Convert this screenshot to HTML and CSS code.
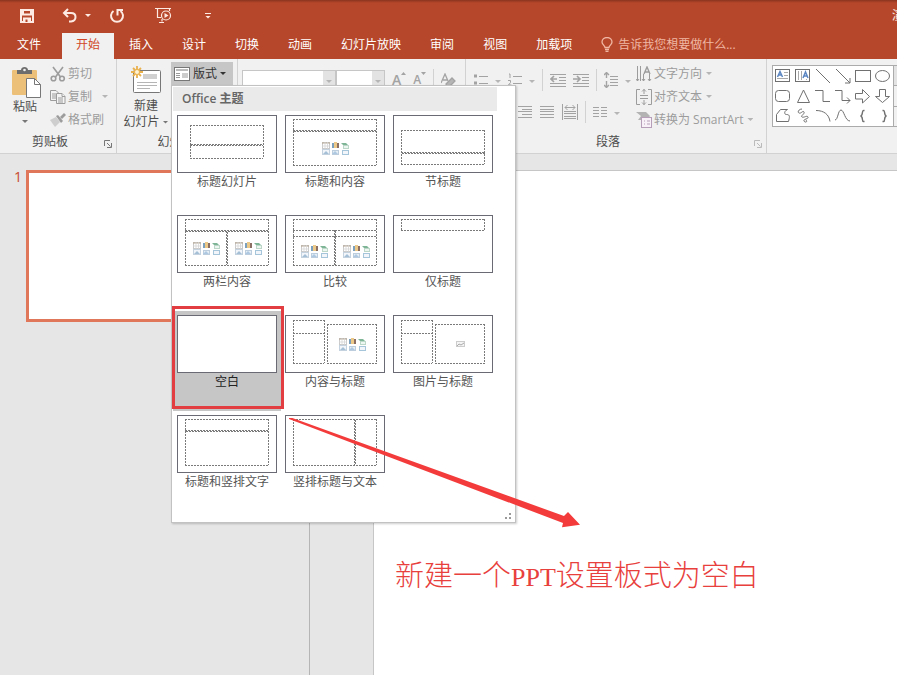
FILE: index.html
```html
<!DOCTYPE html>
<html lang="zh-CN">
<head>
<meta charset="utf-8">
<title>PowerPoint</title>
<link rel="stylesheet" href="styles.css">
</head>
<body>
<svg class="defs" aria-hidden="true">
  <symbol id="cluster" viewBox="0 0 27 13">
    <rect x=".5" y=".5" width="7" height="6" fill="#fff" stroke="#c9c9c9"/><path d="M0 1h8" stroke="#b5a58f"/><path d="M3 0v7M5.500 0v7M0 4h8" stroke="#d4d4d4" stroke-width=".8"/>
    <rect x="10" y="1" width="2" height="5" fill="#7ba0bd"/><rect x="12" y="0" width="3" height="6" fill="#ecc988"/><rect x="15" y="1" width="2" height="5" fill="#8b6f63"/>
    <path d="M19 1h5l2 2h-5z" fill="#7fb597"/><rect x="21.500" y="3.500" width="5" height="3" fill="#eef6f2" stroke="#bcd6c8"/>
    <rect x=".5" y="7.500" width="7" height="5" fill="#f2f6fa" stroke="#c4d2e0"/><path d="M1 12l3-3 3 3z" fill="#a5bfd6"/>
    <rect x="10.500" y="8.500" width="6" height="4" fill="#e6eef6" stroke="#bccede"/><path d="M10 12l3-3 3 3z" fill="#adc8e0"/>
    <rect x="20.500" y="8.500" width="6" height="4" fill="#f2f6fa" stroke="#a5c5db"/>
  </symbol>
  <symbol id="launcher" viewBox="0 0 8 8"><path d="M.5 6V.5H6M3 3l3.500 3.500M7.500 3v4.500H3" fill="none" stroke="currentColor"/></symbol>
</svg>
<div class="app">
  <header class="titlebar">
    <div class="quick">
      <button class="q save" aria-label="保存"><svg width="16" height="16" viewBox="0 0 16 16" fill="none" stroke="currentColor" stroke-width="2"><path d="M2 2h12v12H2zM4 2v4.500h8V2"/><path d="M4 9.500h8V14H4z" fill="currentColor" stroke="none"/><path d="M6.500 11.500v2.500h2v-2.500z" fill="#b7472a" stroke="none"/></svg></button>
      <button class="q undo" aria-label="撤消"><svg width="16" height="16" viewBox="0 0 16 16" fill="none" stroke="currentColor" stroke-width="2"><path d="M6 1L2 5l4 4M2.500 5H9c6 0 6 8 0 8.500H7"/></svg><i class="caret"></i></button>
      <button class="q redo" aria-label="重复"><svg width="16" height="16" viewBox="0 0 16 16" fill="none" stroke="currentColor" stroke-width="2"><path d="M4.500 3a6 6 0 1 0 7 0M8.500 7.500V2H14"/></svg></button>
      <button class="q show" aria-label="从头开始"><svg width="17" height="17" viewBox="0 0 17 17" fill="none" stroke="currentColor" stroke-width="1.200"><path d="M0 1.500h16M2.500 2v8.500H6M14.500 2v2M7 12v2.500M4 15.500h5"/><circle cx="11" cy="8.500" r="4.500"/><path d="M9.500 6v5l4-2.500z" fill="currentColor" stroke="none"/></svg></button>
      <button class="q more" aria-label="自定义快速访问工具栏"><i class="bar"></i><i class="caret"></i></button>
      <span class="doc">演</span>
    </div>
    <nav class="tabs">
      <a class="tab file" href="#">文件</a><a class="tab on" href="#">开始</a><a class="tab" href="#">插入</a><a class="tab" href="#">设计</a><a class="tab" href="#">切换</a><a class="tab" href="#">动画</a><a class="tab" href="#">幻灯片放映</a><a class="tab" href="#">审阅</a><a class="tab" href="#">视图</a><a class="tab" href="#">加载项</a>
      <a class="tab tell" href="#"><svg width="12" height="15" viewBox="0 0 12 15" fill="none" stroke="currentColor" stroke-width="1.300"><path d="M4 10.500c0-2-3-3-3-5.500a5 4.500 0 0 1 10 0c0 2.500-3 3.500-3 5.500zM4 12.500h4M4.500 14.300h3"/></svg>告诉我您想要做什么...</a>
    </nav>
  </header>

  <section class="ribbon">
    <div class="group clip">
      <div class="body">
        <button class="big paste"><svg width="30" height="31" viewBox="0 0 30 31"><rect x="0" y="3" width="25" height="25" rx="1" fill="#ecc078"/><path d="M5 3h4c0-4 7-4 7 0h4v4H5z" fill="#6d6d6d"/><circle cx="12.500" cy="3" r="1.300" fill="#f0f0f0"/><path d="M14.500 11.500h8l6 6v13h-14z" fill="#fff" stroke="#777"/><path d="M22.500 11.500v6h6" fill="none" stroke="#777"/></svg><span>粘贴</span><i class="caret"></i></button>
        <div class="stack">
          <button class="tool off"><svg width="16" height="16" viewBox="0 0 16 16" fill="none" stroke="currentColor" stroke-width="1.600"><path d="M3 1l7.500 10M13 1L5.500 11"/><circle cx="3.500" cy="12.500" r="2.300"/><circle cx="12" cy="12.500" r="2.300"/></svg>剪切</button>
          <button class="tool off"><svg width="16" height="16" viewBox="0 0 16 16" fill="#f4f4f4" stroke="currentColor"><path d="M.5 1.500H6l3 3v7H.5zM2 5h4M2 7h4M2 9h4"/><path d="M6.500 4.500H12l3 3v7H6.500z"/><path d="M12 4.500v3h3M8 9h5M8 11h5M8 13h5"/></svg>复制<i class="caret far"></i></button>
          <button class="tool off"><svg width="16" height="16" viewBox="0 0 16 16" fill="currentColor"><path d="M0 8l6-3 4 5-5 5z" opacity=".4"/><path d="M6 4l2-1 5 6-2 2z"/><path d="M10 5l4-4 2 2-4 4z"/></svg>格式刷</button>
        </div>
      </div>
      <div class="foot"><span>剪贴板</span><button class="launch" aria-label="剪贴板选项"><svg width="8" height="8"><use href="#launcher"/></svg></button></div>
    </div>

    <div class="group slides">
      <div class="body">
        <button class="big new"><svg width="30" height="27" viewBox="0 0 30 27"><rect x="2.500" y="4.500" width="27" height="22" rx="1" fill="#fff" stroke="#777"/><rect x="12" y="8" width="14" height="5" fill="#d0d0d0"/><path d="M6 16.500h20M6 19.500h20M6 22.500h13" stroke="#b5b5b5"/><path d="M6 0v12M0 6h12M2 2l8 8M10 2l-8 8" stroke="#e9b04e" stroke-width="1.800"/><circle cx="6" cy="6" r="2.500" fill="#fff3d4" stroke="#e9b04e"/></svg><span>新建</span><span class="line">幻灯片<i class="caret"></i></span></button>
        <div class="dropdown">
          <button class="layout" aria-expanded="true"><svg width="16" height="14" viewBox="0 0 16 14" fill="none" stroke="#777"><rect x=".5" y=".5" width="15" height="13" fill="#fff"/><path d="M2 3h12" stroke-width="2" stroke="#bbb"/><path d="M2 6.500h4M2 8.500h4M2 10.500h4" stroke="#999"/><rect x="8" y="6" width="6" height="5" fill="#ccc" stroke="none"/></svg>版式<i class="caret"></i></button>
          <div class="menu">
            <h2>Office 主题</h2>
            <div class="grid">
              <button class="item"><svg class="thumb" viewBox="0 0 100 58"><path d="M13 10.500h73M13 30.500h73M14 29.500h72M13 43.500h73M13.500 10v33M86.500 10v33"/></svg>标题幻灯片</button>
              <button class="item"><svg class="thumb" viewBox="0 0 100 58"><path d="M8 4.500h84M8 15.500h84M9 16.500h83M8 50.500h84M8.500 4v46M91.500 4v46"/><use href="#cluster" x="37" y="27" width="27" height="13"/></svg>标题和内容</button>
              <button class="item"><svg class="thumb" viewBox="0 0 100 58"><path d="M8 15.500h84M8 37.500h84M9 38.500h83M8 49.500h84M8.500 15v34M91.500 15v34"/></svg>节标题</button>
              <button class="item"><svg class="thumb" viewBox="0 0 100 58"><path d="M8 4.500h84M8 15.500h84M9 16.500h83M8 50.500h84M8.500 4v46M91.500 4v46M49.500 16v34M50.500 17v33"/><use href="#cluster" x="16" y="27" width="27" height="13"/><use href="#cluster" x="58" y="27" width="27" height="13"/></svg>两栏内容</button>
              <button class="item"><svg class="thumb" viewBox="0 0 100 58"><path d="M8 4.500h84M8 15.500h84M8 21.500h84M8 50.500h84M8.500 4v46M91.500 4v46M49.500 15v35M50.500 16v34"/><use href="#cluster" x="16" y="30" width="27" height="13"/><use href="#cluster" x="58" y="30" width="27" height="13"/></svg>比较</button>
              <button class="item"><svg class="thumb" viewBox="0 0 100 58"><path d="M8 4.500h84M8 15.500h84M8.500 4v11M91.500 4v11"/></svg>仅标题</button>
              <button class="item picked"><svg class="thumb" viewBox="0 0 100 58"></svg>空白</button>
              <button class="item"><svg class="thumb" viewBox="0 0 100 58"><path d="M8 5.500h31M8 18.500h31M8 48.500h31M8.500 5v43M39.500 5v43M42 9.500h50M42 48.500h50M42.500 9v39M91.500 9v39"/><use href="#cluster" x="54" y="23" width="27" height="13"/></svg>内容与标题</button>
              <button class="item"><svg class="thumb" viewBox="0 0 100 58"><path d="M8 5.500h31M8 18.500h31M8 48.500h31M8.500 5v43M39.500 5v43M42 9.500h50M42 48.500h50M42.500 9v39M91.500 9v39"/><rect x="63.500" y="26.500" width="8" height="5" fill="#f4f4f4" stroke="#ccc"/><path class="solid" d="M64 31l2-2 2 1 3-2"/></svg>图片与标题</button>
              <button class="item"><svg class="thumb" viewBox="0 0 100 58"><path d="M8 4.500h84M8 15.500h84M9 16.500h83M8 50.500h84M8.500 4v46M91.500 4v46"/></svg>标题和竖排文字</button>
              <button class="item"><svg class="thumb" viewBox="0 0 100 58"><path d="M8 4.500h84M8 50.500h84M8.500 4v46M91.500 4v46M69.500 4v46M70.500 5v45"/></svg>竖排标题与文本</button>
            </div>
            <svg class="grip" width="8" height="8" viewBox="0 0 8 8" fill="#999"><path d="M4 0h2v2H4zM0 4h2v2H0zM4 4h2v2H4z"/></svg>
          </div>
        </div>
      </div>
      <div class="foot"><span>幻灯片</span></div>
    </div>

    <div class="group font">
      <div class="body">
        <div class="row">
          <span class="combo name"><select aria-label="字体"><option></option></select><i class="caret"></i></span><span class="combo size"><select aria-label="字号"><option></option></select><i class="caret"></i></span>
          <button class="glyph big-a" aria-label="增大字号">A<svg width="5" height="4" viewBox="0 0 5 4"><path d="M0 3l2.500-3L5 3z" fill="currentColor"/></svg></button>
          <button class="glyph" aria-label="减小字号">A<svg width="5" height="4" viewBox="0 0 5 4"><path d="M0 0h5L2.500 3z" fill="currentColor"/></svg></button>
          <i class="sep"></i>
          <button class="glyph" aria-label="清除格式"><svg width="15" height="15" viewBox="0 0 15 15" fill="none" stroke="currentColor" stroke-width="1.300"><path d="M0 10L4 1l3 7M2 7h4"/><path d="M5 11l6-6 3 3-6 6H6z" fill="#b5b5b5"/></svg></button>
        </div>
      </div>
      <div class="foot"></div>
    </div>

    <div class="group para">
      <div class="body">
        <div class="rows">
          <div class="row">
            <button class="split" aria-label="项目符号"><svg width="14" height="14" viewBox="0 0 14 14" stroke="currentColor"><path d="M0 3h3M0 10h3" stroke-width="3"/><path d="M5 3.500h9M5 10.500h9"/></svg><i class="caret"></i></button>
            <button class="split" aria-label="编号"><svg width="14" height="14" viewBox="0 0 14 14" stroke="currentColor" fill="none"><path d="M1 1h1v4M0 7.500h2.500v2L.5 12h3M5 3.500h9M5 10.500h9"/></svg><i class="caret"></i></button>
            <i class="sep"></i>
            <button class="icon" aria-label="降低列表级别"><svg width="16" height="14" viewBox="0 0 16 14" fill="none" stroke="currentColor"><path d="M0 1.500h16M9 4.500h7M9 7.500h7M0 10.500h16M0 13.500h16"/><path d="M7 6H1M4 3L1 6l3 3" stroke-width="1.600"/></svg></button>
            <button class="icon" aria-label="提高列表级别"><svg width="16" height="14" viewBox="0 0 16 14" fill="none" stroke="currentColor"><path d="M0 1.500h16M9 4.500h7M9 7.500h7M0 10.500h16M0 13.500h16"/><path d="M0 6h6M4 3l3 3-3 3" stroke-width="1.600"/></svg></button>
            <i class="sep"></i>
            <button class="split" aria-label="行距"><svg width="14" height="16" viewBox="0 0 14 16" fill="none" stroke="currentColor"><path d="M6 4.500h8M6 7.500h8M6 10.500h8M6 13.500h8"/><path d="M2.500 0v6M0 3l2.500-2.500L5 3M2.500 9v6M0 13l2.500 2.500L5 13" stroke-width="1.400"/></svg><i class="caret"></i></button>
          </div>
          <div class="row">
            <button class="icon" aria-label="左对齐"><svg width="15" height="12" viewBox="0 0 15 12" stroke="currentColor"><path d="M0 .5h14M0 3.500h9M0 6.500h14M0 9.500h9"/></svg></button>
            <button class="icon" aria-label="居中"><svg width="15" height="12" viewBox="0 0 15 12" stroke="currentColor"><path d="M0 .5h14M3 3.500h8M0 6.500h14M3 9.500h8"/></svg></button>
            <button class="icon" aria-label="右对齐"><svg width="15" height="12" viewBox="0 0 15 12" stroke="currentColor"><path d="M0 .5h14M4 3.500h10M0 5.500h14M4 8.500h10M0 11.500h14"/></svg></button>
            <button class="icon" aria-label="两端对齐"><svg width="15" height="12" viewBox="0 0 15 12" stroke="currentColor"><path d="M0 .5h14M0 3.500h14M0 5.500h14M0 8.500h14M0 11.500h14"/></svg></button>
            <button class="icon" aria-label="分散对齐"><svg width="16" height="16" viewBox="0 0 16 16" fill="none" stroke="currentColor"><path d="M.5 0v16M15.500 0v16M2 7.500h12M2 9.500h12M2 12.500h12M2 14.500h12M3 3.500h10M5.500 1L3 3.500 5.500 6M10.500 1L13 3.500 10.500 6"/></svg></button>
            <i class="sep"></i>
            <button class="split" aria-label="分栏"><svg width="14" height="12" viewBox="0 0 14 12" stroke="currentColor"><path d="M0 1.500h6M0 4.500h6M0 7.500h6M0 10.500h6M8 1.500h6M8 4.500h6M8 7.500h6M8 10.500h6"/></svg><i class="caret"></i></button>
          </div>
        </div>
        <div class="stack">
          <button class="tool off"><svg width="16" height="16" viewBox="0 0 16 16" fill="none" stroke="currentColor"><path d="M1.500 0v15M4.500 0v15M7.500 8v7M13.500 8v7M0 13l1.500 2L3 13M6 13l1.500 2L9 13M12 13l1.500 2 1.500-2"/><path d="M8 8l3-7 3 7M9 6h4" stroke-width="1.400"/></svg>文字方向<i class="caret"></i></button>
          <button class="tool off"><svg width="16" height="16" viewBox="0 0 16 16" fill="none" stroke="currentColor"><path d="M4 .5H.5v15H4M12 .5h3.500v15H12M4 6.500h8M4 9.500h8M8 0v5M8 11v5M6 2.500L8 .5l2 2M6 13.500l2 2 2-2"/></svg>对齐文本<i class="caret"></i></button>
          <button class="tool off"><svg width="16" height="16" viewBox="0 0 16 16"><path d="M0 0h10l4 4-3 4H2l3-4z" fill="#b3b3b3"/><rect x="5.500" y="5.500" width="10" height="10" fill="#f8f2f8" stroke="#b79fb9"/><path d="M8 9h1M11 9h3M8 12h1M11 12h3" stroke="#b79fb9"/></svg>转换为 SmartArt<i class="caret"></i></button>
        </div>
      </div>
      <div class="foot"><span>段落</span><button class="launch pale" aria-label="段落选项"><svg width="8" height="8"><use href="#launcher"/></svg></button></div>
    </div>

    <div class="group draw">
      <div class="body">
        <div class="shapes">
          <svg viewBox="0 0 20 20"><rect x="2.500" y="3.500" width="14" height="12"/><path d="M11 6.500h4M11 9.500h4M4 12.500h11" stroke="#aaa"/><path class="blue" d="M4.500 11L7 5.500 9.500 11M5.500 9h3"/></svg>
          <svg viewBox="0 0 20 20"><rect x="2.500" y="3.500" width="14" height="12"/><path d="M5.500 5v9M8.500 5v9M13.500 13v1" stroke="#aaa"/><path class="blue" d="M10 12l2.500-6 2.500 6M11 10h3"/></svg>
          <svg viewBox="0 0 20 20"><path d="M3 3l14 14"/></svg>
          <svg viewBox="0 0 20 20"><path d="M3 3l14 14M17 12v5h-5"/></svg>
          <svg viewBox="0 0 20 20"><rect x="2.500" y="4.500" width="15" height="11"/></svg>
          <svg viewBox="0 0 20 20"><ellipse cx="9.500" cy="10" rx="7" ry="5.500"/></svg>
          <svg viewBox="0 0 20 20"><rect x="2.500" y="4.500" width="14" height="11" rx="3"/></svg>
          <svg viewBox="0 0 20 20"><path d="M10.500 4l6 12.500h-12z"/></svg>
          <svg viewBox="0 0 20 20"><path d="M2 4.500h8v11h7"/></svg>
          <svg viewBox="0 0 20 20"><path d="M2 4.500h7v10h8M14 11.500l3 3-3 3"/></svg>
          <svg viewBox="0 0 20 20"><path d="M2.500 7.500h7v-4l7 7-7 6.500v-4h-7z"/></svg>
          <svg viewBox="0 0 20 20"><path d="M6.500 3.500h6v7h4l-7 6-7-6h4z"/></svg>
          <svg viewBox="0 0 20 20"><path d="M3.500 15.500v-7l4-5h7c-3 1-4 5-1 5 4 0 3 3 2 7z"/></svg>
          <svg viewBox="0 0 20 20"><path d="M9 3C6 3 4 6 6 7s4-3 5-1-4 4-2 5 5-2 6 0-5 2-4 4 4 1 2-1"/></svg>
          <svg viewBox="0 0 20 20"><path d="M3 4.500c8 0 13 4 14 11"/></svg>
          <svg viewBox="0 0 20 20"><path d="M2 14c3 0 3-10 6-10s4 11 9 11"/></svg>
          <svg viewBox="0 0 20 20"><path d="M11.500 4.500h-1c-2 0 0 5-3 5.500 3 .5 1 5.500 3 5.500h1" stroke-width="1.400"/></svg>
          <svg viewBox="0 0 20 20"><path d="M9.500 4.500h1c2 0 0 5 3 5.500-3 .5-1 5.500-3 5.500h-1" stroke-width="1.400"/></svg>
        </div>
        <div class="scroll"><i></i><i></i><i></i></div>
      </div>
      <div class="foot"></div>
    </div>
  </section>

  <main class="work">
    <aside class="panel"><span class="num">1</span><div class="mini"></div></aside>
    <div class="canvas"><div class="slide"></div></div>
  </main>

  <svg class="arrow" width="292" height="110" viewBox="0 0 292 110"><path d="M0 0l2-.5L275 98l4-4 12 12.700-18 2.600 1-4.300L0 1z" fill="#f43b3b"/></svg>
  <p class="note">新建一个<span>PPT</span>设置板式为空白</p>
</div>
</body>
</html>
```
FILE: styles.css
```css
* { box-sizing: border-box; }
body {
  margin: 0;
  font: 12px/16px "Open Sans", "Noto Sans CJK SC", sans-serif;
  color: #4d4d4d;
}
button {
  margin: 0; padding: 0; border: 0; background: none;
  font: inherit; color: inherit;
}
svg { display: block; flex: none; }
.defs { position: absolute; width: 0; height: 0; }
.app {
  position: relative;
  display: flex; flex-direction: column;
  min-height: 100vh; overflow: hidden;
}
.caret {
  flex: none; width: 6px; height: 3px;
  background: currentColor; clip-path: polygon(0 0, 100% 0, 50% 100%);
}

.titlebar {
  display: flex; flex-direction: column;
  height: 59px; color: #fdebe3;
  background: linear-gradient(#8a3520, #b7472a 3px);
}
.quick { display: flex; align-items: center; height: 31px; padding-left: 19px; }
.q { display: flex; align-items: center; gap: 7px; height: 29px; }
.undo { margin-left: 27px; }
.redo { margin-left: 18px; }
.show { margin-left: 30px; }
.more { flex-direction: column; justify-content: center; gap: 2px; margin-left: 33px; }
.bar { width: 6px; height: 1px; background: currentColor; }
.doc { flex: none; width: 5px; margin-left: auto; overflow: hidden; white-space: nowrap; }
.tabs { display: flex; gap: 1px; flex: 1; padding-top: 2px; }
.tab {
  display: flex; align-items: center; padding: 0 14px 3px;
  color: #fff; text-decoration: none; white-space: nowrap;
}
.file { padding-left: 17px; padding-right: 20px; }
.on { background: #f1f1f1; color: #d04727; }
.tell { gap: 5px; color: #efb7a4; }

.ribbon {
  display: flex; height: 95px;
  background: #f1f1f1; border-bottom: 1px solid #d2d2d2;
}
.group {
  display: flex; flex-direction: column; flex: none;
  padding-top: 3px; border-right: 1px solid #d2d2d2;
}
.body { display: flex; height: 69px; }
.foot {
  display: flex; align-items: center; height: 24px; padding: 0 3px 0 0;
}
.foot span { flex: 1; text-align: center; }
.launch { width: 9px; height: 8px; margin: 4px 0 0 4px; color: #777; }
.pale { color: #bbb; }
.clip { width: 117px; }
.slides { width: 121px; }
.font { width: 228px; }
.para { width: 301px; }
.draw { flex: 1 0 auto; border-right: 0; }

.big {
  display: flex; flex-direction: column; align-items: center;
  line-height: 16px; white-space: nowrap;
}
.paste { width: 50px; padding-top: 5px; gap: 1px; }
.paste svg { margin-left: 4px; }
.paste .caret { margin-top: 4px; color: #777; }
.new { width: 54px; padding: 4px 0 0 4px; }
.new svg { margin-bottom: 5px; }
.line { display: flex; align-items: center; gap: 3px; }
.line .caret { color: #777; }
.stack { display: flex; flex-direction: column; }
.tool {
  display: flex; align-items: center; gap: 2px; height: 23px;
  white-space: nowrap;
}
.tool .caret { margin-left: 2px; color: #b5b5b5; }
.tool .far { margin-left: 8px; }
.off { color: #9c9c9c; }

.dropdown { position: relative; }
.layout {
  display: flex; align-items: center; gap: 3px;
  width: 62px; height: 23px; padding-left: 3px;
  background: #c6c6c6; color: #333;
}
.menu {
  position: absolute; z-index: 2; top: 23px; left: 0;
  width: 345px; padding: 1px 1px 11px;
  background: #fff; border: 1px solid #c2c2c2;
  box-shadow: 1px 1px 2px #0003;
}
.menu h2 {
  margin: 0 17px 0 0; padding-left: 9px;
  font-size: 12px; line-height: 24px; font-weight: 600;
  color: #666; background: #eaeaea;
}
.grid { display: grid; grid-template-columns: repeat(3, 108px); grid-auto-rows: 100px; }
.item {
  position: relative;
  display: flex; flex-direction: column; align-items: center;
  padding-top: 4px; line-height: 18px; white-space: nowrap;
  color: #555;
}
.thumb {
  width: 100px; height: 58px; background: #fff;
  box-shadow: inset 0 0 0 1px #6a6a74;
}
.thumb > path { fill: none; stroke: #7a7a7a; stroke-dasharray: 2 1; }
.thumb > .solid { stroke: #aaa; stroke-dasharray: none; }
.picked { background: #c6c6c6; color: #222; }
.picked::after {
  content: ""; position: absolute; inset: -5px -3px 2px -1px;
  border: 3px solid #e23d40;
}
.grip { position: absolute; right: 2px; bottom: 1px; }

.row { display: flex; align-items: center; gap: 7px; height: 32px; color: #a3a3a3; }
.font .row { padding: 4px 0 0 4px; }
.combo { position: relative; flex: none; }
.combo select {
  display: block; width: 100%; height: 20px; border: 1px solid #c6c6c6; border-radius: 0;
  appearance: none;
  background: linear-gradient(to left, #e3e3e3 12px, #fff 12px);
}
.combo .caret { position: absolute; right: 4px; top: 10px; color: #b5b5b5; }
.name { width: 94px; }
.size { width: 49px; margin-left: -7px; }
.glyph { display: flex; align-items: center; font-weight: 600; }
.glyph svg { align-self: flex-start; }
.big-a { font-size: 14px; }
.sep { flex: none; width: 1px; height: 22px; background: #d2d2d2; }
.rows { width: 170px; padding: 2px 0 0 8px; }
.split { display: flex; align-items: center; gap: 7px; }
.split .caret { margin-top: 3px; color: #b5b5b5; }

.draw .body { padding: 3px 0 3px 5px; }
.shapes {
  display: grid; grid-template: repeat(3, 20px) / repeat(6, 20px);
  background: #fff; border: 1px solid #ababab; height: 62px;
}
.shapes svg { fill: none; stroke: #707070; }
.shapes .blue { stroke: #5b86c2; stroke-width: 1.500; }
.scroll { flex: 1; display: grid; height: 62px; }
.scroll i { border-bottom: 1px solid #ababab; }
.scroll i:first-child { border-top: 1px solid #ababab; background: #e3e3e3; }

.work { flex: 1; display: flex; background: #e6e6e6; }
.panel {
  display: flex; align-items: flex-start; gap: 4px;
  width: 310px; padding: 16px 18px 0 14px; border-right: 1px solid #b5b5b5;
}
.num { font-size: 14px; line-height: 14px; color: #c6492c; }
.mini { flex: 1; height: 152px; background: #fff; border: 3px solid #e0775b; }
.canvas { flex: 1; display: flex; padding: 16px 0 0 63px; }
.slide { flex: 1; background: #fff; border: 1px solid #c6c6c6; border-width: 1px 0 0 1px; }

.arrow { position: absolute; z-index: 3; left: 289px; top: 418px; }
.note {
  position: absolute; left: 395px; top: 553px; margin: 0;
  font: 300 29px/40px "Noto Sans CJK SC", sans-serif;
  color: #e8403c; white-space: nowrap;
}
.note span { font-family: "Liberation Serif", serif; font-size: 26px; }
```
